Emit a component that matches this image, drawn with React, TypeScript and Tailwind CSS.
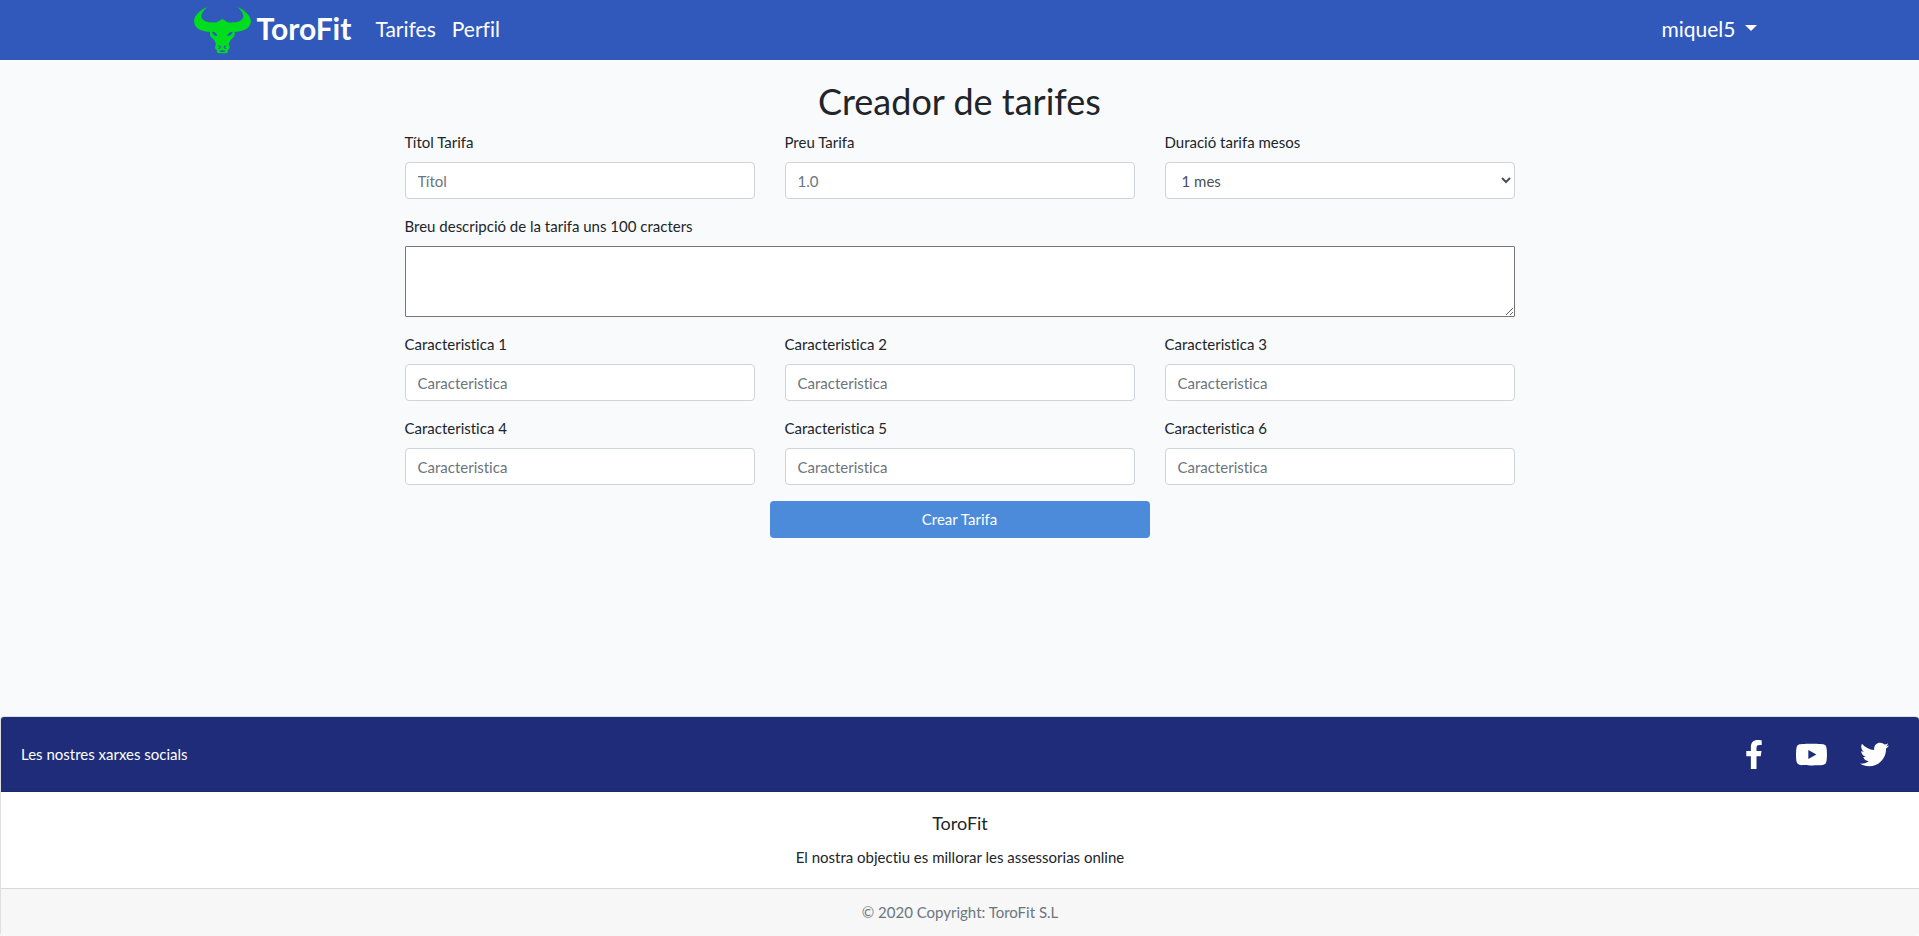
import type { ReactNode } from "react";
import { FaFacebookF, FaTwitter, FaYoutube } from "react-icons/fa";

const controlClass =
  "h-[37px] w-full rounded border border-[#ced4da] bg-white px-3 text-[15px] text-[#495057] placeholder:text-[#6c757d]";

function BullLogo() {
  return (
    <svg viewBox="27 20 171 141" className="h-[47px] w-[57px] shrink-0" fill="#00dc1e" aria-hidden="true">
      <path
        fillRule="evenodd"
        d="M66 21C46 28 28 46 27 62C28 82 44 93 72 94L75 95C74 104 76 109 81 113C88 118 90 124 93 132C89 140 89 147 96 149C94 155 97 159 103 159H121C128 159 130 155 128 149C135 147 135 140 131 132C134 124 136 118 143 113C148 109 150 104 149 95L152 94C180 93 197 82 198 62C196 46 178 28 158 21C170 32 178 44 174 53C168 64 152 67 142 66C134 68 127 66 121 61L112 56L103 61C97 66 90 68 82 66C72 67 56 64 50 53C46 44 54 32 66 21ZM81 94C87 94 96 98 97 107C89 107 82 102 81 94ZM143 94C137 94 128 98 127 107C135 107 142 102 143 94ZM97 137C102 133 108 136 108 141C107 146 102 148 98 145C103 145 105 142 103 139C101 137 99 137 97 137ZM127 137C122 133 116 136 116 141C117 146 122 148 126 145C121 145 119 142 121 139C123 137 125 137 127 137ZM102 152C108 149 116 149 122 152C117 156 107 156 102 152Z"
      />
    </svg>
  );
}

function Field({ id, label, children }: { id: string; label: string; children: ReactNode }) {
  return (
    <div>
      <label htmlFor={id} className="mb-2 block text-[15px] leading-[23px]">
        {label}
      </label>
      {children}
    </div>
  );
}

export default function App() {
  return (
    <div className="flex min-h-screen flex-col bg-[#f8fafc] font-['Lato','Open_Sans',sans-serif] text-[#212529] [font-variant-ligatures:none]">
      <nav className="flex h-[60px] items-center bg-[#3059bb] px-[8%] text-[21px] text-white">
        <a href="#" className="ml-10 flex items-center gap-1.5 text-[30px] font-bold">
          <BullLogo />
          <span className="pb-1">ToroFit</span>
        </a>
        <a href="#" className="ml-6 pb-0.5">Tarifes</a>
        <a href="#" className="ml-4 pb-0.5">Perfil</a>
        <button type="button" className="mr-2 ml-auto flex items-center gap-2.5 pb-0.5">
          miquel5
          <svg viewBox="0 0 12 6" className="mb-0.5 h-1.5 w-3" fill="currentColor" aria-hidden="true">
            <path d="M0 0H12L6 6Z" />
          </svg>
        </button>
      </nav>

      <main className="mx-auto w-full max-w-[1140px] px-[15px] pt-5 pb-10">
        <h1 className="mb-2 text-center text-4xl leading-[43px]">Creador de tarifes</h1>
        <form className="grid grid-cols-3 gap-x-[30px] gap-y-4">
          <Field id="titol" label="Títol Tarifa">
            <input id="titol" type="text" placeholder="Títol" className={controlClass} />
          </Field>
          <Field id="preu" label="Preu Tarifa">
            <input id="preu" type="text" placeholder="1.0" className={controlClass} />
          </Field>
          <Field id="duracio" label="Duració tarifa mesos">
            <select id="duracio" className={controlClass}>
              <option>1 mes</option>
              <option>3 mesos</option>
              <option>6 mesos</option>
              <option>12 mesos</option>
            </select>
          </Field>
          <div className="col-span-3">
            <Field id="descripcio" label="Breu descripció de la tarifa uns 100 cracters">
              <textarea
                id="descripcio"
                className="block h-[71px] w-full rounded-[1px] border border-[#767676] bg-white p-0.5 text-[15px]"
              />
            </Field>
          </div>
          {[1, 2, 3, 4, 5, 6].map((n) => (
            <Field key={n} id={`car${n}`} label={`Caracteristica ${n}`}>
              <input id={`car${n}`} type="text" placeholder="Caracteristica" className={controlClass} />
            </Field>
          ))}
          <div className="col-span-3 flex justify-center">
            <button type="submit" className="h-[37px] w-[380px] rounded bg-[#4c8bda] text-[15px] text-white">
              Crear Tarifa
            </button>
          </div>
        </form>
      </main>

      <footer className="mt-auto overflow-hidden rounded border border-r-0 border-b-0 border-[#dfdfdf] bg-white text-[15px] leading-[23px]">
        <div className="flex h-[75px] items-center justify-between border-b border-[#1b2869] bg-[#1e2c79] pr-[30px] pl-5 text-white">
          <span>Les nostres xarxes socials</span>
          <div className="flex items-center gap-8">
            <a href="#" aria-label="Facebook"><FaFacebookF className="h-[29px] w-[18px]" /></a>
            <a href="#" aria-label="YouTube"><FaYoutube className="h-[29px] w-[33px]" /></a>
            <a href="#" aria-label="Twitter"><FaTwitter className="h-[29px] w-[29px]" /></a>
          </div>
        </div>
        <div className="px-5 pt-5 pb-[19px] text-center">
          <h2 className="mb-3 text-lg leading-[22px]">ToroFit</h2>
          <p>El nostra objectiu es millorar les assessorias online</p>
        </div>
        <div className="border-t border-[#d8d8d8] bg-[#f7f7f7] py-3 text-center text-[#6c757d]">
          © 2020 Copyright: ToroFit S.L
        </div>
      </footer>
    </div>
  );
}
